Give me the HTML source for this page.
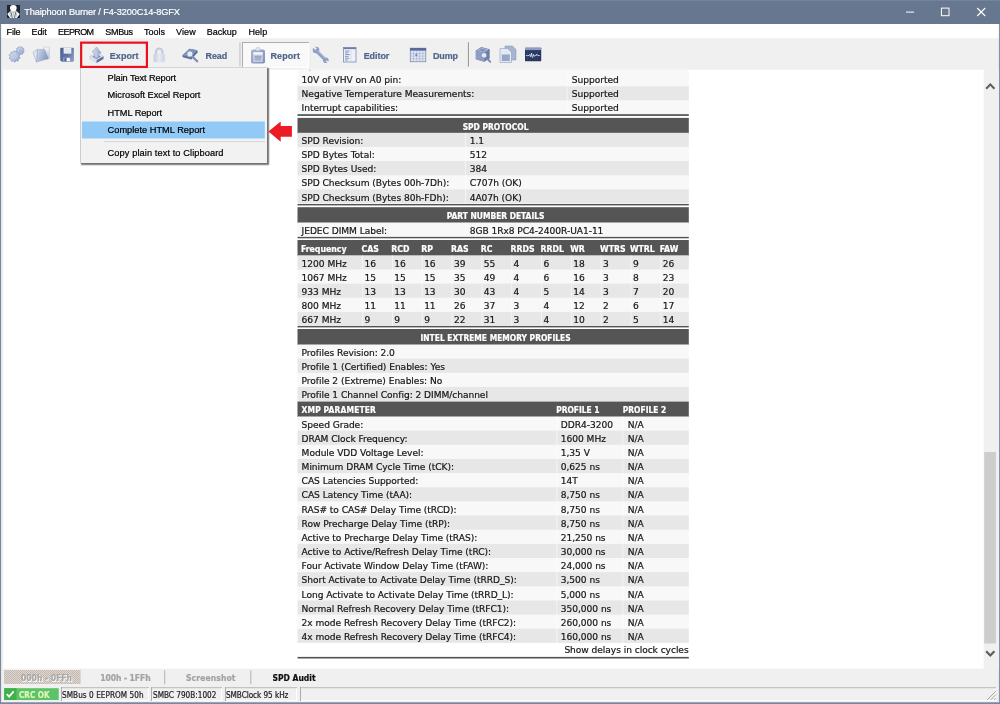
<!DOCTYPE html>
<html lang="en"><head><meta charset="utf-8"><title>Thaiphoon Burner / F4-3200C14-8GFX</title>
<style>
html,body{margin:0;padding:0}
body{width:1000px;height:704px;overflow:hidden;background:#f0f0f0;position:relative;font-family:"Liberation Sans","DejaVu Sans",sans-serif}
#w{filter:blur(.35px);position:absolute;left:0;top:0;width:1000px;height:704px;overflow:hidden}
#w div,#w svg{position:absolute}
.t{white-space:nowrap;-webkit-text-stroke:.2px}
</style></head><body><div id="w">
<svg style="left:0;top:0" width="1000" height="704" viewBox="0 0 1000 704">
<rect x="0.00" y="0.00" width="1000.00" height="24.00" fill="#66778f"/>
<rect x="0.00" y="0.00" width="1000.00" height="1.00" fill="#73849d"/>
<rect x="1.00" y="24.00" width="998.00" height="14.20" fill="#fff"/>
<rect x="3.30" y="69.80" width="980.50" height="598.80" fill="#fff"/>
<rect x="0.00" y="24.00" width="1.10" height="680.00" fill="#7a889f"/>
<rect x="998.90" y="24.00" width="1.10" height="680.00" fill="#8592a8"/>
<rect x="0.00" y="702.30" width="1000.00" height="1.70" fill="#78879f"/>
<rect x="239.30" y="42.30" width="1.30" height="23.80" fill="#c9c9c9"/>
<rect x="467.90" y="42.30" width="1.10" height="24.30" fill="#9c9c9c"/>
<rect x="297.50" y="69.80" width="391.30" height="17.30" fill="#f8f8f8"/>
<rect x="566.60" y="69.80" width="1.00" height="16.50" fill="rgba(255,255,255,.55)"/>
<rect x="309.40" y="69.90" width="1.00" height="0.90" fill="#8a8a8a"/>
<rect x="297.50" y="86.30" width="391.30" height="14.75" fill="#e7e7e7"/>
<rect x="566.60" y="86.30" width="1.00" height="13.95" fill="rgba(255,255,255,.55)"/>
<rect x="297.50" y="100.25" width="391.30" height="14.00" fill="#f8f8f8"/>
<rect x="566.60" y="100.25" width="1.00" height="14.00" fill="rgba(255,255,255,.55)"/>
<rect x="297.50" y="114.20" width="391.30" height="1.70" fill="#525252"/>
<rect x="297.50" y="117.90" width="391.30" height="15.70" fill="#555"/>
<rect x="297.50" y="132.80" width="391.30" height="14.95" fill="#e7e7e7"/>
<rect x="465.00" y="132.80" width="1.00" height="14.15" fill="rgba(255,255,255,.55)"/>
<rect x="297.50" y="146.95" width="391.30" height="14.95" fill="#f8f8f8"/>
<rect x="465.00" y="146.95" width="1.00" height="14.15" fill="rgba(255,255,255,.55)"/>
<rect x="297.50" y="161.10" width="391.30" height="14.95" fill="#e7e7e7"/>
<rect x="465.00" y="161.10" width="1.00" height="14.15" fill="rgba(255,255,255,.55)"/>
<rect x="297.50" y="175.25" width="391.30" height="14.95" fill="#f8f8f8"/>
<rect x="465.00" y="175.25" width="1.00" height="14.15" fill="rgba(255,255,255,.55)"/>
<rect x="297.50" y="189.40" width="391.30" height="14.15" fill="#e7e7e7"/>
<rect x="465.00" y="189.40" width="1.00" height="14.15" fill="rgba(255,255,255,.55)"/>
<rect x="297.50" y="204.00" width="391.30" height="1.40" fill="#525252"/>
<rect x="297.50" y="207.20" width="391.30" height="16.10" fill="#555"/>
<rect x="297.50" y="222.50" width="391.30" height="14.40" fill="#f8f8f8"/>
<rect x="465.00" y="222.50" width="1.00" height="14.40" fill="rgba(255,255,255,.55)"/>
<rect x="297.50" y="236.90" width="391.30" height="1.40" fill="#525252"/>
<rect x="297.50" y="240.00" width="391.30" height="16.10" fill="#555"/>
<rect x="297.50" y="255.30" width="391.30" height="14.95" fill="#e7e7e7"/>
<rect x="362.10" y="255.30" width="1.00" height="14.15" fill="rgba(255,255,255,.55)"/>
<rect x="391.92" y="255.30" width="1.00" height="14.15" fill="rgba(255,255,255,.55)"/>
<rect x="421.74" y="255.30" width="1.00" height="14.15" fill="rgba(255,255,255,.55)"/>
<rect x="451.56" y="255.30" width="1.00" height="14.15" fill="rgba(255,255,255,.55)"/>
<rect x="481.38" y="255.30" width="1.00" height="14.15" fill="rgba(255,255,255,.55)"/>
<rect x="511.20" y="255.30" width="1.00" height="14.15" fill="rgba(255,255,255,.55)"/>
<rect x="541.02" y="255.30" width="1.00" height="14.15" fill="rgba(255,255,255,.55)"/>
<rect x="570.84" y="255.30" width="1.00" height="14.15" fill="rgba(255,255,255,.55)"/>
<rect x="600.66" y="255.30" width="1.00" height="14.15" fill="rgba(255,255,255,.55)"/>
<rect x="630.48" y="255.30" width="1.00" height="14.15" fill="rgba(255,255,255,.55)"/>
<rect x="660.30" y="255.30" width="1.00" height="14.15" fill="rgba(255,255,255,.55)"/>
<rect x="297.50" y="269.45" width="391.30" height="14.95" fill="#f8f8f8"/>
<rect x="362.10" y="269.45" width="1.00" height="14.15" fill="rgba(255,255,255,.55)"/>
<rect x="391.92" y="269.45" width="1.00" height="14.15" fill="rgba(255,255,255,.55)"/>
<rect x="421.74" y="269.45" width="1.00" height="14.15" fill="rgba(255,255,255,.55)"/>
<rect x="451.56" y="269.45" width="1.00" height="14.15" fill="rgba(255,255,255,.55)"/>
<rect x="481.38" y="269.45" width="1.00" height="14.15" fill="rgba(255,255,255,.55)"/>
<rect x="511.20" y="269.45" width="1.00" height="14.15" fill="rgba(255,255,255,.55)"/>
<rect x="541.02" y="269.45" width="1.00" height="14.15" fill="rgba(255,255,255,.55)"/>
<rect x="570.84" y="269.45" width="1.00" height="14.15" fill="rgba(255,255,255,.55)"/>
<rect x="600.66" y="269.45" width="1.00" height="14.15" fill="rgba(255,255,255,.55)"/>
<rect x="630.48" y="269.45" width="1.00" height="14.15" fill="rgba(255,255,255,.55)"/>
<rect x="660.30" y="269.45" width="1.00" height="14.15" fill="rgba(255,255,255,.55)"/>
<rect x="297.50" y="283.60" width="391.30" height="14.95" fill="#e7e7e7"/>
<rect x="362.10" y="283.60" width="1.00" height="14.15" fill="rgba(255,255,255,.55)"/>
<rect x="391.92" y="283.60" width="1.00" height="14.15" fill="rgba(255,255,255,.55)"/>
<rect x="421.74" y="283.60" width="1.00" height="14.15" fill="rgba(255,255,255,.55)"/>
<rect x="451.56" y="283.60" width="1.00" height="14.15" fill="rgba(255,255,255,.55)"/>
<rect x="481.38" y="283.60" width="1.00" height="14.15" fill="rgba(255,255,255,.55)"/>
<rect x="511.20" y="283.60" width="1.00" height="14.15" fill="rgba(255,255,255,.55)"/>
<rect x="541.02" y="283.60" width="1.00" height="14.15" fill="rgba(255,255,255,.55)"/>
<rect x="570.84" y="283.60" width="1.00" height="14.15" fill="rgba(255,255,255,.55)"/>
<rect x="600.66" y="283.60" width="1.00" height="14.15" fill="rgba(255,255,255,.55)"/>
<rect x="630.48" y="283.60" width="1.00" height="14.15" fill="rgba(255,255,255,.55)"/>
<rect x="660.30" y="283.60" width="1.00" height="14.15" fill="rgba(255,255,255,.55)"/>
<rect x="297.50" y="297.75" width="391.30" height="14.95" fill="#f8f8f8"/>
<rect x="362.10" y="297.75" width="1.00" height="14.15" fill="rgba(255,255,255,.55)"/>
<rect x="391.92" y="297.75" width="1.00" height="14.15" fill="rgba(255,255,255,.55)"/>
<rect x="421.74" y="297.75" width="1.00" height="14.15" fill="rgba(255,255,255,.55)"/>
<rect x="451.56" y="297.75" width="1.00" height="14.15" fill="rgba(255,255,255,.55)"/>
<rect x="481.38" y="297.75" width="1.00" height="14.15" fill="rgba(255,255,255,.55)"/>
<rect x="511.20" y="297.75" width="1.00" height="14.15" fill="rgba(255,255,255,.55)"/>
<rect x="541.02" y="297.75" width="1.00" height="14.15" fill="rgba(255,255,255,.55)"/>
<rect x="570.84" y="297.75" width="1.00" height="14.15" fill="rgba(255,255,255,.55)"/>
<rect x="600.66" y="297.75" width="1.00" height="14.15" fill="rgba(255,255,255,.55)"/>
<rect x="630.48" y="297.75" width="1.00" height="14.15" fill="rgba(255,255,255,.55)"/>
<rect x="660.30" y="297.75" width="1.00" height="14.15" fill="rgba(255,255,255,.55)"/>
<rect x="297.50" y="311.90" width="391.30" height="14.15" fill="#e7e7e7"/>
<rect x="362.10" y="311.90" width="1.00" height="14.15" fill="rgba(255,255,255,.55)"/>
<rect x="391.92" y="311.90" width="1.00" height="14.15" fill="rgba(255,255,255,.55)"/>
<rect x="421.74" y="311.90" width="1.00" height="14.15" fill="rgba(255,255,255,.55)"/>
<rect x="451.56" y="311.90" width="1.00" height="14.15" fill="rgba(255,255,255,.55)"/>
<rect x="481.38" y="311.90" width="1.00" height="14.15" fill="rgba(255,255,255,.55)"/>
<rect x="511.20" y="311.90" width="1.00" height="14.15" fill="rgba(255,255,255,.55)"/>
<rect x="541.02" y="311.90" width="1.00" height="14.15" fill="rgba(255,255,255,.55)"/>
<rect x="570.84" y="311.90" width="1.00" height="14.15" fill="rgba(255,255,255,.55)"/>
<rect x="600.66" y="311.90" width="1.00" height="14.15" fill="rgba(255,255,255,.55)"/>
<rect x="630.48" y="311.90" width="1.00" height="14.15" fill="rgba(255,255,255,.55)"/>
<rect x="660.30" y="311.90" width="1.00" height="14.15" fill="rgba(255,255,255,.55)"/>
<rect x="297.50" y="326.00" width="391.30" height="1.40" fill="#525252"/>
<rect x="297.50" y="329.00" width="391.30" height="16.30" fill="#555"/>
<rect x="297.50" y="344.50" width="391.30" height="14.95" fill="#f8f8f8"/>
<rect x="297.50" y="358.65" width="391.30" height="14.95" fill="#e7e7e7"/>
<rect x="297.50" y="372.80" width="391.30" height="14.95" fill="#f8f8f8"/>
<rect x="297.50" y="386.95" width="391.30" height="14.95" fill="#e7e7e7"/>
<rect x="297.50" y="401.60" width="391.30" height="15.70" fill="#555"/>
<rect x="297.50" y="416.50" width="391.30" height="14.95" fill="#f8f8f8"/>
<rect x="556.30" y="416.50" width="1.00" height="14.15" fill="rgba(255,255,255,.55)"/>
<rect x="622.30" y="416.50" width="1.00" height="14.15" fill="rgba(255,255,255,.55)"/>
<rect x="297.50" y="430.65" width="391.30" height="14.95" fill="#e7e7e7"/>
<rect x="556.30" y="430.65" width="1.00" height="14.15" fill="rgba(255,255,255,.55)"/>
<rect x="622.30" y="430.65" width="1.00" height="14.15" fill="rgba(255,255,255,.55)"/>
<rect x="297.50" y="444.80" width="391.30" height="14.95" fill="#f8f8f8"/>
<rect x="556.30" y="444.80" width="1.00" height="14.15" fill="rgba(255,255,255,.55)"/>
<rect x="622.30" y="444.80" width="1.00" height="14.15" fill="rgba(255,255,255,.55)"/>
<rect x="297.50" y="458.95" width="391.30" height="14.95" fill="#e7e7e7"/>
<rect x="556.30" y="458.95" width="1.00" height="14.15" fill="rgba(255,255,255,.55)"/>
<rect x="622.30" y="458.95" width="1.00" height="14.15" fill="rgba(255,255,255,.55)"/>
<rect x="297.50" y="473.10" width="391.30" height="14.95" fill="#f8f8f8"/>
<rect x="556.30" y="473.10" width="1.00" height="14.15" fill="rgba(255,255,255,.55)"/>
<rect x="622.30" y="473.10" width="1.00" height="14.15" fill="rgba(255,255,255,.55)"/>
<rect x="297.50" y="487.25" width="391.30" height="14.95" fill="#e7e7e7"/>
<rect x="556.30" y="487.25" width="1.00" height="14.15" fill="rgba(255,255,255,.55)"/>
<rect x="622.30" y="487.25" width="1.00" height="14.15" fill="rgba(255,255,255,.55)"/>
<rect x="297.50" y="501.40" width="391.30" height="14.95" fill="#f8f8f8"/>
<rect x="556.30" y="501.40" width="1.00" height="14.15" fill="rgba(255,255,255,.55)"/>
<rect x="622.30" y="501.40" width="1.00" height="14.15" fill="rgba(255,255,255,.55)"/>
<rect x="297.50" y="515.55" width="391.30" height="14.95" fill="#e7e7e7"/>
<rect x="556.30" y="515.55" width="1.00" height="14.15" fill="rgba(255,255,255,.55)"/>
<rect x="622.30" y="515.55" width="1.00" height="14.15" fill="rgba(255,255,255,.55)"/>
<rect x="297.50" y="529.70" width="391.30" height="14.95" fill="#f8f8f8"/>
<rect x="556.30" y="529.70" width="1.00" height="14.15" fill="rgba(255,255,255,.55)"/>
<rect x="622.30" y="529.70" width="1.00" height="14.15" fill="rgba(255,255,255,.55)"/>
<rect x="297.50" y="543.85" width="391.30" height="14.95" fill="#e7e7e7"/>
<rect x="556.30" y="543.85" width="1.00" height="14.15" fill="rgba(255,255,255,.55)"/>
<rect x="622.30" y="543.85" width="1.00" height="14.15" fill="rgba(255,255,255,.55)"/>
<rect x="297.50" y="558.00" width="391.30" height="14.95" fill="#f8f8f8"/>
<rect x="556.30" y="558.00" width="1.00" height="14.15" fill="rgba(255,255,255,.55)"/>
<rect x="622.30" y="558.00" width="1.00" height="14.15" fill="rgba(255,255,255,.55)"/>
<rect x="297.50" y="572.15" width="391.30" height="14.95" fill="#e7e7e7"/>
<rect x="556.30" y="572.15" width="1.00" height="14.15" fill="rgba(255,255,255,.55)"/>
<rect x="622.30" y="572.15" width="1.00" height="14.15" fill="rgba(255,255,255,.55)"/>
<rect x="297.50" y="586.30" width="391.30" height="14.95" fill="#f8f8f8"/>
<rect x="556.30" y="586.30" width="1.00" height="14.15" fill="rgba(255,255,255,.55)"/>
<rect x="622.30" y="586.30" width="1.00" height="14.15" fill="rgba(255,255,255,.55)"/>
<rect x="297.50" y="600.45" width="391.30" height="14.95" fill="#e7e7e7"/>
<rect x="556.30" y="600.45" width="1.00" height="14.15" fill="rgba(255,255,255,.55)"/>
<rect x="622.30" y="600.45" width="1.00" height="14.15" fill="rgba(255,255,255,.55)"/>
<rect x="297.50" y="614.60" width="391.30" height="14.95" fill="#f8f8f8"/>
<rect x="556.30" y="614.60" width="1.00" height="14.15" fill="rgba(255,255,255,.55)"/>
<rect x="622.30" y="614.60" width="1.00" height="14.15" fill="rgba(255,255,255,.55)"/>
<rect x="297.50" y="628.75" width="391.30" height="14.15" fill="#e7e7e7"/>
<rect x="556.30" y="628.75" width="1.00" height="14.15" fill="rgba(255,255,255,.55)"/>
<rect x="622.30" y="628.75" width="1.00" height="14.15" fill="rgba(255,255,255,.55)"/>
<rect x="297.50" y="656.90" width="391.30" height="1.60" fill="#525252"/>
<rect x="983.80" y="69.80" width="15.20" height="598.80" fill="#f0f0f0"/>
<rect x="984.20" y="452.00" width="11.70" height="191.50" fill="#cdcdcd"/>
<rect x="164.20" y="670.30" width="1.00" height="14.00" fill="#b4b4b4"/>
<rect x="250.30" y="670.30" width="1.00" height="14.00" fill="#b4b4b4"/>
<rect x="4.20" y="688.20" width="54.50" height="11.80" fill="#5ec268"/>
<rect x="4.20" y="688.20" width="12.30" height="11.80" fill="#3fb14a"/>
</svg>
<svg style="left:6.900px;top:5px" width="13" height="13" viewBox="0 0 13 13">
<rect width="13" height="13" fill="#1d2834"/>
<path d="M4.300 5L.300 9.100 3.100 13h6.800l2.800-3.900L8.400 5z" fill="#fff"/>
<path d="M4.500 5.400L6.350 13 8.200 5.400z" fill="#c6cace"/>
<path d="M3.700 6.300L5.300 12.800M9 6.300L7.400 12.800" stroke="#1d2834" stroke-width=".7" fill="none"/>
<path d="M2.600 7.400L4 12.600M10.100 7.400L8.700 12.600" stroke="#55606c" stroke-width=".45" fill="none"/>
<ellipse cx="6.350" cy="3.100" rx="3.350" ry="3" fill="#fff"/>
</svg>
<div class="t" style="font:9.2px 'Liberation Sans',sans-serif;color:#fff;top:2.30px;height:20px;line-height:20px;letter-spacing:-0.113px;left:24.20px;">Thaiphoon Burner / F4-3200C14-8GFX</div>
<svg style="left:900px;top:0" width="100" height="24" viewBox="0 0 100 24" fill="none" stroke="#fff" stroke-width="1">
<path d="M6 12.100h8.100"/>
<rect x="41.400" y="8.100" width="7.600" height="7.600"/>
<path d="M77.200 8l8 8M85.200 8l-8 8" stroke-width="1.100"/>
</svg>
<div class="t" style="font:9.0px 'Liberation Sans',sans-serif;color:#000;top:22.00px;height:20px;line-height:20px;letter-spacing:-0.204px;left:6.60px;">File</div>
<div class="t" style="font:9.0px 'Liberation Sans',sans-serif;color:#000;top:22.00px;height:20px;line-height:20px;letter-spacing:-0.104px;left:31.50px;">Edit</div>
<div class="t" style="font:9.0px 'Liberation Sans',sans-serif;color:#000;top:22.00px;height:20px;line-height:20px;letter-spacing:-0.603px;left:58.10px;">EEPROM</div>
<div class="t" style="font:9.0px 'Liberation Sans',sans-serif;color:#000;top:22.00px;height:20px;line-height:20px;letter-spacing:-0.323px;left:105.30px;">SMBus</div>
<div class="t" style="font:9.0px 'Liberation Sans',sans-serif;color:#000;top:22.00px;height:20px;line-height:20px;letter-spacing:-0.003px;left:144.10px;">Tools</div>
<div class="t" style="font:9.0px 'Liberation Sans',sans-serif;color:#000;top:22.00px;height:20px;line-height:20px;letter-spacing:0.135px;left:176.00px;">View</div>
<div class="t" style="font:9.0px 'Liberation Sans',sans-serif;color:#000;top:22.00px;height:20px;line-height:20px;letter-spacing:-0.005px;left:206.80px;">Backup</div>
<div class="t" style="font:9.0px 'Liberation Sans',sans-serif;color:#000;top:22.00px;height:20px;line-height:20px;letter-spacing:0.096px;left:248.40px;">Help</div>
<div style="left:242.00px;top:42.00px;width:66.50px;height:25.50px;background:#f9f9f9;box-shadow:inset 1px 1px 0 #adadad, inset -1px -1px 0 #fff;"></div>
<div class="t" style="font:bold 8.98px 'Liberation Sans',sans-serif;color:#4f648c;top:46.40px;height:20px;line-height:20px;letter-spacing:0.082px;left:109.80px;">Export</div>
<div class="t" style="font:bold 8.98px 'Liberation Sans',sans-serif;color:#4f648c;top:46.40px;height:20px;line-height:20px;letter-spacing:-0.084px;left:205.50px;">Read</div>
<div class="t" style="font:bold 8.98px 'Liberation Sans',sans-serif;color:#4f648c;top:46.40px;height:20px;line-height:20px;letter-spacing:0.099px;left:270.50px;">Report</div>
<div class="t" style="font:bold 8.98px 'Liberation Sans',sans-serif;color:#4f648c;top:46.40px;height:20px;line-height:20px;letter-spacing:-0.054px;left:363.70px;">Editor</div>
<div class="t" style="font:bold 8.98px 'Liberation Sans',sans-serif;color:#4f648c;top:46.40px;height:20px;line-height:20px;letter-spacing:-0.080px;left:432.90px;">Dump</div>
<svg style="left:0;top:40px" width="560" height="30" viewBox="0 40 560 30">
<defs>
<linearGradient id="gA" x1="0" y1="0" x2="1" y2="1"><stop offset="0" stop-color="#c4cee5"/><stop offset="1" stop-color="#98a7c9"/></linearGradient>
<linearGradient id="gB" x1="0" y1="0" x2="1" y2="1"><stop offset="0" stop-color="#93a2c5"/><stop offset="1" stop-color="#eef1f8"/></linearGradient>
<linearGradient id="gC" x1="0" y1="0" x2="0" y2="1"><stop offset="0" stop-color="#f4f6fa"/><stop offset="1" stop-color="#b9c4dc"/></linearGradient>
<linearGradient id="gD" x1="0" y1="0" x2="0" y2="1"><stop offset="0" stop-color="#6a7eab"/><stop offset="1" stop-color="#4f6494"/></linearGradient>
<linearGradient id="gL" x1="0" y1="0" x2="1" y2="0"><stop offset="0" stop-color="#c3cce0"/><stop offset=".5" stop-color="#e6eaf2"/><stop offset="1" stop-color="#cbd3e4"/></linearGradient>
<linearGradient id="gG" x1="0" y1="0" x2="1" y2="1"><stop offset="0" stop-color="#d6dfef"/><stop offset=".55" stop-color="#b4c2de"/><stop offset="1" stop-color="#8699c2"/></linearGradient>
<linearGradient id="gF" x1="0" y1="0" x2="1" y2=".35"><stop offset="0" stop-color="#d3dbec"/><stop offset="1" stop-color="#8b9cc2"/></linearGradient>
<linearGradient id="gD2" x1="0" y1="0" x2="1" y2=".6"><stop offset="0" stop-color="#4b6091"/><stop offset=".6" stop-color="#5f74a3"/><stop offset="1" stop-color="#8496bd"/></linearGradient>
<linearGradient id="gE" x1="0" y1="0" x2="1" y2="0"><stop offset="0" stop-color="#d5dded"/><stop offset=".5" stop-color="#bcc8e0"/><stop offset="1" stop-color="#8a9bc3"/></linearGradient>
<linearGradient id="gR" x1="0" y1="0" x2="1" y2="1"><stop offset="0" stop-color="#aab7d4"/><stop offset="1" stop-color="#7f90b9"/></linearGradient>
</defs>
<path d="M24.22 51.53L24.01 52.24L23.00 52.47L22.65 52.95L22.72 53.99L22.11 54.39L21.18 53.92L20.60 54.06L19.99 54.90L19.27 54.82L18.86 53.86L18.33 53.60L17.32 53.85L16.81 53.32L17.11 52.32L16.88 51.78L15.95 51.32L15.90 50.59L16.77 50.02L16.94 49.46L16.52 48.51L16.95 47.92L17.98 48.04L18.48 47.71L18.76 46.72L19.48 46.55L20.19 47.30L20.78 47.37L21.64 46.79L22.29 47.12L22.35 48.15L22.76 48.58L23.79 48.69L24.08 49.36L23.46 50.20L23.50 50.79ZM20.80 50.70A0.7 0.7 0 1 0 19.40 50.70A0.7 0.7 0 1 0 20.80 50.70Z" fill="url(#gG)" fill-rule="evenodd" stroke="#8295bf" stroke-width=".6"/>
<path d="M20.09 57.61L19.85 58.46L18.61 58.76L18.20 59.36L18.39 60.63L17.69 61.17L16.51 60.68L15.83 60.93L15.24 62.06L14.36 62.09L13.69 61.01L12.99 60.81L11.85 61.38L11.12 60.89L11.21 59.61L10.77 59.04L9.51 58.83L9.20 58.00L10.03 57.02L10.00 56.30L9.11 55.39L9.35 54.54L10.59 54.24L11.00 53.64L10.81 52.37L11.51 51.83L12.69 52.32L13.37 52.07L13.96 50.94L14.84 50.91L15.51 51.99L16.21 52.19L17.35 51.62L18.08 52.11L17.99 53.39L18.43 53.96L19.69 54.17L20.00 55.00L19.17 55.98L19.20 56.70ZM15.50 56.50A0.9 0.9 0 1 0 13.70 56.50A0.9 0.9 0 1 0 15.50 56.50Z" fill="url(#gG)" fill-rule="evenodd" stroke="#8295bf" stroke-width=".6"/>
<circle cx="14.600" cy="56.500" r="1.700" fill="none" stroke="#d9e1f0" stroke-width=".7"/>
<path d="M43 49.400L44.200 47.100L48.600 47.100Q49.400 47.100 49.400 47.900L49.400 58.400L47 59.200z" fill="url(#gC)" stroke="#aab6d1" stroke-width=".5"/>
<path d="M37.300 49.400L44.600 49.400L48 57.600L48 58.800L36.500 62.100z" fill="url(#gF)" stroke="#8b9bc1" stroke-width=".4"/>
<path d="M33.100 52.300L37.300 49.500L36.500 62.100z" fill="#e2e7f2" stroke="#8e9ec3" stroke-width=".5"/>
<path d="M60.200 48.800q0-1 1-1h11.700q1 0 1 1v12q0 1-1 1H61.800l-1.600-1.600z" fill="url(#gD2)"/>
<rect x="63.600" y="47.800" width="7.700" height="5.800" fill="#eef1f7"/>
<path d="M64.600 49.600h5.700M64.600 51.600h5.700" stroke="#d3dae8" stroke-width=".8"/>
<rect x="63.100" y="57.400" width="7.700" height="4.400" fill="#8fa0c5"/>
<rect x="64.500" y="58.200" width="1.500" height="3" fill="#50659a"/>
<rect x="67" y="58.100" width="2.800" height="3.100" fill="#fff"/>
<path d="M89.900 56.300L96.300 53.200L103.500 56.300L96.600 60.200z" fill="#e9edf5" stroke="#9aa9cb" stroke-width=".4"/>
<path d="M92.300 56.400L96.400 54.400L101 56.400L96.600 58.900z" fill="#6b7fac"/>
<path d="M89.900 56.300L96.600 60.200L96.600 63.100L89.900 59.200z" fill="#dfe5f1" stroke="#a3b0cf" stroke-width=".3"/>
<path d="M96.600 60.200L103.500 56.300L103.500 59L96.600 63.100z" fill="#5b709f"/>
<path d="M96.600 47L101.200 53.200L98.900 53L98.900 57L96.600 58.200L94.200 57L94.200 52.400L92.200 52z" fill="url(#gE)" stroke="#8394bd" stroke-width=".5"/>
<path d="M156 54.500v-2.600a3.200 3.300 0 0 1 6.400 0v2.600" fill="none" stroke="#c3cbdd" stroke-width="2.300"/>
<rect x="153.600" y="53.400" width="11.200" height="8.900" rx="1.500" fill="url(#gL)"/>
<path d="M182.300 55.500l7.200-6.800 7.800 1.600.5 2-6.500 7.200-8.500-2.200z" fill="#5a6e9d"/>
<path d="M182.300 55.500l7.200-6.800 7.800 1.600-6.800 6.700z" fill="#8092ba"/>
<path d="M192.200 56.500l5 4.800" stroke="#7b8cb5" stroke-width="2.200" stroke-linecap="round"/>
<circle cx="189.900" cy="54" r="3.100" fill="#e6ebf4" stroke="#8595bb" stroke-width=".9"/>
<rect x="251" y="49.400" width="14" height="14.100" rx="1.800" fill="url(#gR)"/>
<rect x="256" y="47.600" width="4" height="3.200" rx=".9" fill="#dfe5f1" stroke="#a3b0cf" stroke-width=".4"/>
<rect x="253.400" y="52.300" width="9.200" height="9.400" fill="#dbe1ee"/>
<rect x="253.400" y="52.300" width="9.200" height="2" fill="#f3f5f9"/>
<rect x="254.500" y="55.400" width="7" height="5.300" fill="#a4b1d0"/>
<path d="M254.500 56.700h7" stroke="#8e9ec3" stroke-width=".6"/>
<path d="M317 51.500l8.400 8.400" stroke="#8e9fc6" stroke-width="3.300" stroke-linecap="round"/>
<circle cx="316" cy="50" r="3.300" fill="#8e9fc6"/>
<path d="M312.800 46.200l3.300 3.100" stroke="#f0f0f0" stroke-width="1.900"/>
<circle cx="325.800" cy="60.200" r="2.800" fill="#8e9fc6"/>
<path d="M326.200 60.700l2.600 2.500" stroke="#f0f0f0" stroke-width="1.500"/>
<path d="M317.500 50.800l8 8" stroke="#b9c5df" stroke-width=".8" stroke-linecap="round"/>
<rect x="343.500" y="47.500" width="12.500" height="14.500" fill="#eef1f8" stroke="#7a8cb5" stroke-width=".8"/>
<rect x="343.500" y="47.500" width="12.500" height="1.600" fill="#6b7eab"/>
<path d="M345 51h4.500M345 52.800h3.500M345 54.600h5M345 56.400h3.500M345 58.200h4.500M345 60h3" stroke="#6f82ad" stroke-width=".8"/>
<path d="M351 50v11" stroke="#c8d0e3" stroke-width=".6"/>
<rect x="410.300" y="48.200" width="15.500" height="13.500" fill="#e3e8f3" stroke="#7a8cb5" stroke-width=".8"/>
<rect x="410" y="48" width="16.100" height="2.700" fill="#586c9c"/>
<path d="M410.500 53.400h15M410.500 56.100h15M410.500 58.800h15M413.500 51v10.500M416.600 51v10.500M419.700 51v10.500M422.800 51v10.500" stroke="#a3b0cf" stroke-width=".6"/>
<rect x="415.400" y="54.200" width="1.800" height="1.500" fill="#586c9c"/>
<path d="M475.800 50.500l5.600-3.400 8.300 2.200v9.200l-5.400 3.300-8.500-2.500z" fill="#6a7dab"/>
<path d="M477.500 50.600l4.200-2.400 6 1.600-4 2.400z" fill="#8091ba" stroke="#c5cfe4" stroke-width=".7"/>
<path d="M475.800 50.500l8.500 2.400v8.900l-8.500-2.500z" fill="#8d9dc3"/>
<path d="M486 57.500l4.300 4.400" stroke="#7183ad" stroke-width="1.700" stroke-linecap="round"/>
<circle cx="484" cy="55.300" r="2.800" fill="#e3e8f3" stroke="#7c8db6" stroke-width=".9"/>
<path d="M505 46h7.500l3.500 3.500v10.500h-11z" fill="#a7b4d2" stroke="#7f90b8" stroke-width=".5"/>
<path d="M500 48.500h7.700l3.800 3.800v10.200h-11.500z" fill="#e4e9f3" stroke="#8d9dc2" stroke-width=".6"/>
<rect x="501.800" y="54.500" width="8" height="6.500" fill="#98a7c8"/>
<rect x="525" y="47.700" width="16.200" height="13.500" rx=".6" fill="#263660"/>
<rect x="525" y="47.700" width="16.200" height="2.400" fill="#8e9dc1"/>
<path d="M526 55.600h3l.8-1.200.8 2.400.9-3.600 1 4.800.9-3.600.8 1.800.8-.6h1.200l.7-1.500.8 1.500h2" fill="none" stroke="#fff" stroke-width=".8"/>
<path d="M527.500 50.500v10M530 50.500v10M532.500 50.500v10M535 50.500v10M537.500 50.500v10" stroke="#4a5b88" stroke-width=".4"/>
</svg>
<div class="t" style="font:9.1px 'DejaVu Sans',sans-serif;color:#161616;top:69.90px;height:20px;line-height:20px;letter-spacing:-0.050px;left:301.60px;">10V of VHV on A0 pin:</div>
<div class="t" style="font:9.1px 'DejaVu Sans',sans-serif;color:#161616;top:69.90px;height:20px;line-height:20px;letter-spacing:-0.050px;left:571.80px;">Supported</div>
<div class="t" style="font:9.1px 'DejaVu Sans',sans-serif;color:#161616;top:84.10px;height:20px;line-height:20px;letter-spacing:-0.050px;left:301.60px;">Negative Temperature Measurements:</div>
<div class="t" style="font:9.1px 'DejaVu Sans',sans-serif;color:#161616;top:84.10px;height:20px;line-height:20px;letter-spacing:-0.050px;left:571.80px;">Supported</div>
<div class="t" style="font:9.1px 'DejaVu Sans',sans-serif;color:#161616;top:98.10px;height:20px;line-height:20px;letter-spacing:-0.050px;left:301.60px;">Interrupt capabilities:</div>
<div class="t" style="font:9.1px 'DejaVu Sans',sans-serif;color:#161616;top:98.10px;height:20px;line-height:20px;letter-spacing:-0.050px;left:571.80px;">Supported</div>
<div class="t" style="font:bold condensed 8.39px 'DejaVu Sans Condensed','DejaVu Sans',sans-serif;color:#fff;top:116.55px;height:20px;line-height:20px;left:295.60px;width:400px;text-align:center;">SPD PROTOCOL</div>
<div class="t" style="font:9.1px 'DejaVu Sans',sans-serif;color:#161616;top:131.00px;height:20px;line-height:20px;letter-spacing:-0.050px;left:301.60px;">SPD Revision:</div>
<div class="t" style="font:9.1px 'DejaVu Sans',sans-serif;color:#161616;top:131.00px;height:20px;line-height:20px;letter-spacing:-0.050px;left:469.70px;">1.1</div>
<div class="t" style="font:9.1px 'DejaVu Sans',sans-serif;color:#161616;top:145.15px;height:20px;line-height:20px;letter-spacing:-0.050px;left:301.60px;">SPD Bytes Total:</div>
<div class="t" style="font:9.1px 'DejaVu Sans',sans-serif;color:#161616;top:145.15px;height:20px;line-height:20px;letter-spacing:-0.050px;left:469.70px;">512</div>
<div class="t" style="font:9.1px 'DejaVu Sans',sans-serif;color:#161616;top:159.30px;height:20px;line-height:20px;letter-spacing:-0.050px;left:301.60px;">SPD Bytes Used:</div>
<div class="t" style="font:9.1px 'DejaVu Sans',sans-serif;color:#161616;top:159.30px;height:20px;line-height:20px;letter-spacing:-0.050px;left:469.70px;">384</div>
<div class="t" style="font:9.1px 'DejaVu Sans',sans-serif;color:#161616;top:173.45px;height:20px;line-height:20px;letter-spacing:-0.050px;left:301.60px;">SPD Checksum (Bytes 00h-7Dh):</div>
<div class="t" style="font:9.1px 'DejaVu Sans',sans-serif;color:#161616;top:173.45px;height:20px;line-height:20px;letter-spacing:-0.050px;left:469.70px;">C707h (OK)</div>
<div class="t" style="font:9.1px 'DejaVu Sans',sans-serif;color:#161616;top:187.60px;height:20px;line-height:20px;letter-spacing:-0.050px;left:301.60px;">SPD Checksum (Bytes 80h-FDh):</div>
<div class="t" style="font:9.1px 'DejaVu Sans',sans-serif;color:#161616;top:187.60px;height:20px;line-height:20px;letter-spacing:-0.050px;left:469.70px;">4A07h (OK)</div>
<div class="t" style="font:bold condensed 8.39px 'DejaVu Sans Condensed','DejaVu Sans',sans-serif;color:#fff;top:206.05px;height:20px;line-height:20px;left:295.60px;width:400px;text-align:center;">PART NUMBER DETAILS</div>
<div class="t" style="font:9.1px 'DejaVu Sans',sans-serif;color:#161616;top:220.70px;height:20px;line-height:20px;letter-spacing:-0.050px;left:301.60px;">JEDEC DIMM Label:</div>
<div class="t" style="font:9.1px 'DejaVu Sans',sans-serif;color:#161616;top:220.70px;height:20px;line-height:20px;letter-spacing:-0.050px;left:469.70px;">8GB 1Rx8 PC4-2400R-UA1-11</div>
<div class="t" style="font:bold condensed 8.69px 'DejaVu Sans Condensed','DejaVu Sans',sans-serif;color:#fff;top:239.00px;height:20px;line-height:20px;left:300.90px;">Frequency</div>
<div class="t" style="font:bold condensed 8.69px 'DejaVu Sans Condensed','DejaVu Sans',sans-serif;color:#fff;top:239.00px;height:20px;line-height:20px;left:361.50px;">CAS</div>
<div class="t" style="font:bold condensed 8.69px 'DejaVu Sans Condensed','DejaVu Sans',sans-serif;color:#fff;top:239.00px;height:20px;line-height:20px;left:391.32px;">RCD</div>
<div class="t" style="font:bold condensed 8.69px 'DejaVu Sans Condensed','DejaVu Sans',sans-serif;color:#fff;top:239.00px;height:20px;line-height:20px;left:421.14px;">RP</div>
<div class="t" style="font:bold condensed 8.69px 'DejaVu Sans Condensed','DejaVu Sans',sans-serif;color:#fff;top:239.00px;height:20px;line-height:20px;left:450.96px;">RAS</div>
<div class="t" style="font:bold condensed 8.69px 'DejaVu Sans Condensed','DejaVu Sans',sans-serif;color:#fff;top:239.00px;height:20px;line-height:20px;left:480.78px;">RC</div>
<div class="t" style="font:bold condensed 8.69px 'DejaVu Sans Condensed','DejaVu Sans',sans-serif;color:#fff;top:239.00px;height:20px;line-height:20px;left:510.60px;">RRDS</div>
<div class="t" style="font:bold condensed 8.69px 'DejaVu Sans Condensed','DejaVu Sans',sans-serif;color:#fff;top:239.00px;height:20px;line-height:20px;left:540.42px;">RRDL</div>
<div class="t" style="font:bold condensed 8.69px 'DejaVu Sans Condensed','DejaVu Sans',sans-serif;color:#fff;top:239.00px;height:20px;line-height:20px;left:570.24px;">WR</div>
<div class="t" style="font:bold condensed 8.69px 'DejaVu Sans Condensed','DejaVu Sans',sans-serif;color:#fff;top:239.00px;height:20px;line-height:20px;left:600.06px;">WTRS</div>
<div class="t" style="font:bold condensed 8.69px 'DejaVu Sans Condensed','DejaVu Sans',sans-serif;color:#fff;top:239.00px;height:20px;line-height:20px;left:629.88px;">WTRL</div>
<div class="t" style="font:bold condensed 8.69px 'DejaVu Sans Condensed','DejaVu Sans',sans-serif;color:#fff;top:239.00px;height:20px;line-height:20px;left:659.70px;">FAW</div>
<div class="t" style="font:9.1px 'DejaVu Sans',sans-serif;color:#161616;top:253.50px;height:20px;line-height:20px;letter-spacing:-0.050px;left:301.60px;">1200 MHz</div>
<div class="t" style="font:9.1px 'DejaVu Sans',sans-serif;color:#161616;top:253.50px;height:20px;line-height:20px;letter-spacing:-0.050px;left:364.50px;">16</div>
<div class="t" style="font:9.1px 'DejaVu Sans',sans-serif;color:#161616;top:253.50px;height:20px;line-height:20px;letter-spacing:-0.050px;left:394.32px;">16</div>
<div class="t" style="font:9.1px 'DejaVu Sans',sans-serif;color:#161616;top:253.50px;height:20px;line-height:20px;letter-spacing:-0.050px;left:424.14px;">16</div>
<div class="t" style="font:9.1px 'DejaVu Sans',sans-serif;color:#161616;top:253.50px;height:20px;line-height:20px;letter-spacing:-0.050px;left:453.96px;">39</div>
<div class="t" style="font:9.1px 'DejaVu Sans',sans-serif;color:#161616;top:253.50px;height:20px;line-height:20px;letter-spacing:-0.050px;left:483.78px;">55</div>
<div class="t" style="font:9.1px 'DejaVu Sans',sans-serif;color:#161616;top:253.50px;height:20px;line-height:20px;letter-spacing:-0.050px;left:513.60px;">4</div>
<div class="t" style="font:9.1px 'DejaVu Sans',sans-serif;color:#161616;top:253.50px;height:20px;line-height:20px;letter-spacing:-0.050px;left:543.42px;">6</div>
<div class="t" style="font:9.1px 'DejaVu Sans',sans-serif;color:#161616;top:253.50px;height:20px;line-height:20px;letter-spacing:-0.050px;left:573.24px;">18</div>
<div class="t" style="font:9.1px 'DejaVu Sans',sans-serif;color:#161616;top:253.50px;height:20px;line-height:20px;letter-spacing:-0.050px;left:603.06px;">3</div>
<div class="t" style="font:9.1px 'DejaVu Sans',sans-serif;color:#161616;top:253.50px;height:20px;line-height:20px;letter-spacing:-0.050px;left:632.88px;">9</div>
<div class="t" style="font:9.1px 'DejaVu Sans',sans-serif;color:#161616;top:253.50px;height:20px;line-height:20px;letter-spacing:-0.050px;left:662.70px;">26</div>
<div class="t" style="font:9.1px 'DejaVu Sans',sans-serif;color:#161616;top:267.65px;height:20px;line-height:20px;letter-spacing:-0.050px;left:301.60px;">1067 MHz</div>
<div class="t" style="font:9.1px 'DejaVu Sans',sans-serif;color:#161616;top:267.65px;height:20px;line-height:20px;letter-spacing:-0.050px;left:364.50px;">15</div>
<div class="t" style="font:9.1px 'DejaVu Sans',sans-serif;color:#161616;top:267.65px;height:20px;line-height:20px;letter-spacing:-0.050px;left:394.32px;">15</div>
<div class="t" style="font:9.1px 'DejaVu Sans',sans-serif;color:#161616;top:267.65px;height:20px;line-height:20px;letter-spacing:-0.050px;left:424.14px;">15</div>
<div class="t" style="font:9.1px 'DejaVu Sans',sans-serif;color:#161616;top:267.65px;height:20px;line-height:20px;letter-spacing:-0.050px;left:453.96px;">35</div>
<div class="t" style="font:9.1px 'DejaVu Sans',sans-serif;color:#161616;top:267.65px;height:20px;line-height:20px;letter-spacing:-0.050px;left:483.78px;">49</div>
<div class="t" style="font:9.1px 'DejaVu Sans',sans-serif;color:#161616;top:267.65px;height:20px;line-height:20px;letter-spacing:-0.050px;left:513.60px;">4</div>
<div class="t" style="font:9.1px 'DejaVu Sans',sans-serif;color:#161616;top:267.65px;height:20px;line-height:20px;letter-spacing:-0.050px;left:543.42px;">6</div>
<div class="t" style="font:9.1px 'DejaVu Sans',sans-serif;color:#161616;top:267.65px;height:20px;line-height:20px;letter-spacing:-0.050px;left:573.24px;">16</div>
<div class="t" style="font:9.1px 'DejaVu Sans',sans-serif;color:#161616;top:267.65px;height:20px;line-height:20px;letter-spacing:-0.050px;left:603.06px;">3</div>
<div class="t" style="font:9.1px 'DejaVu Sans',sans-serif;color:#161616;top:267.65px;height:20px;line-height:20px;letter-spacing:-0.050px;left:632.88px;">8</div>
<div class="t" style="font:9.1px 'DejaVu Sans',sans-serif;color:#161616;top:267.65px;height:20px;line-height:20px;letter-spacing:-0.050px;left:662.70px;">23</div>
<div class="t" style="font:9.1px 'DejaVu Sans',sans-serif;color:#161616;top:281.80px;height:20px;line-height:20px;letter-spacing:-0.050px;left:301.60px;">933 MHz</div>
<div class="t" style="font:9.1px 'DejaVu Sans',sans-serif;color:#161616;top:281.80px;height:20px;line-height:20px;letter-spacing:-0.050px;left:364.50px;">13</div>
<div class="t" style="font:9.1px 'DejaVu Sans',sans-serif;color:#161616;top:281.80px;height:20px;line-height:20px;letter-spacing:-0.050px;left:394.32px;">13</div>
<div class="t" style="font:9.1px 'DejaVu Sans',sans-serif;color:#161616;top:281.80px;height:20px;line-height:20px;letter-spacing:-0.050px;left:424.14px;">13</div>
<div class="t" style="font:9.1px 'DejaVu Sans',sans-serif;color:#161616;top:281.80px;height:20px;line-height:20px;letter-spacing:-0.050px;left:453.96px;">30</div>
<div class="t" style="font:9.1px 'DejaVu Sans',sans-serif;color:#161616;top:281.80px;height:20px;line-height:20px;letter-spacing:-0.050px;left:483.78px;">43</div>
<div class="t" style="font:9.1px 'DejaVu Sans',sans-serif;color:#161616;top:281.80px;height:20px;line-height:20px;letter-spacing:-0.050px;left:513.60px;">4</div>
<div class="t" style="font:9.1px 'DejaVu Sans',sans-serif;color:#161616;top:281.80px;height:20px;line-height:20px;letter-spacing:-0.050px;left:543.42px;">5</div>
<div class="t" style="font:9.1px 'DejaVu Sans',sans-serif;color:#161616;top:281.80px;height:20px;line-height:20px;letter-spacing:-0.050px;left:573.24px;">14</div>
<div class="t" style="font:9.1px 'DejaVu Sans',sans-serif;color:#161616;top:281.80px;height:20px;line-height:20px;letter-spacing:-0.050px;left:603.06px;">3</div>
<div class="t" style="font:9.1px 'DejaVu Sans',sans-serif;color:#161616;top:281.80px;height:20px;line-height:20px;letter-spacing:-0.050px;left:632.88px;">7</div>
<div class="t" style="font:9.1px 'DejaVu Sans',sans-serif;color:#161616;top:281.80px;height:20px;line-height:20px;letter-spacing:-0.050px;left:662.70px;">20</div>
<div class="t" style="font:9.1px 'DejaVu Sans',sans-serif;color:#161616;top:295.95px;height:20px;line-height:20px;letter-spacing:-0.050px;left:301.60px;">800 MHz</div>
<div class="t" style="font:9.1px 'DejaVu Sans',sans-serif;color:#161616;top:295.95px;height:20px;line-height:20px;letter-spacing:-0.050px;left:364.50px;">11</div>
<div class="t" style="font:9.1px 'DejaVu Sans',sans-serif;color:#161616;top:295.95px;height:20px;line-height:20px;letter-spacing:-0.050px;left:394.32px;">11</div>
<div class="t" style="font:9.1px 'DejaVu Sans',sans-serif;color:#161616;top:295.95px;height:20px;line-height:20px;letter-spacing:-0.050px;left:424.14px;">11</div>
<div class="t" style="font:9.1px 'DejaVu Sans',sans-serif;color:#161616;top:295.95px;height:20px;line-height:20px;letter-spacing:-0.050px;left:453.96px;">26</div>
<div class="t" style="font:9.1px 'DejaVu Sans',sans-serif;color:#161616;top:295.95px;height:20px;line-height:20px;letter-spacing:-0.050px;left:483.78px;">37</div>
<div class="t" style="font:9.1px 'DejaVu Sans',sans-serif;color:#161616;top:295.95px;height:20px;line-height:20px;letter-spacing:-0.050px;left:513.60px;">3</div>
<div class="t" style="font:9.1px 'DejaVu Sans',sans-serif;color:#161616;top:295.95px;height:20px;line-height:20px;letter-spacing:-0.050px;left:543.42px;">4</div>
<div class="t" style="font:9.1px 'DejaVu Sans',sans-serif;color:#161616;top:295.95px;height:20px;line-height:20px;letter-spacing:-0.050px;left:573.24px;">12</div>
<div class="t" style="font:9.1px 'DejaVu Sans',sans-serif;color:#161616;top:295.95px;height:20px;line-height:20px;letter-spacing:-0.050px;left:603.06px;">2</div>
<div class="t" style="font:9.1px 'DejaVu Sans',sans-serif;color:#161616;top:295.95px;height:20px;line-height:20px;letter-spacing:-0.050px;left:632.88px;">6</div>
<div class="t" style="font:9.1px 'DejaVu Sans',sans-serif;color:#161616;top:295.95px;height:20px;line-height:20px;letter-spacing:-0.050px;left:662.70px;">17</div>
<div class="t" style="font:9.1px 'DejaVu Sans',sans-serif;color:#161616;top:310.10px;height:20px;line-height:20px;letter-spacing:-0.050px;left:301.60px;">667 MHz</div>
<div class="t" style="font:9.1px 'DejaVu Sans',sans-serif;color:#161616;top:310.10px;height:20px;line-height:20px;letter-spacing:-0.050px;left:364.50px;">9</div>
<div class="t" style="font:9.1px 'DejaVu Sans',sans-serif;color:#161616;top:310.10px;height:20px;line-height:20px;letter-spacing:-0.050px;left:394.32px;">9</div>
<div class="t" style="font:9.1px 'DejaVu Sans',sans-serif;color:#161616;top:310.10px;height:20px;line-height:20px;letter-spacing:-0.050px;left:424.14px;">9</div>
<div class="t" style="font:9.1px 'DejaVu Sans',sans-serif;color:#161616;top:310.10px;height:20px;line-height:20px;letter-spacing:-0.050px;left:453.96px;">22</div>
<div class="t" style="font:9.1px 'DejaVu Sans',sans-serif;color:#161616;top:310.10px;height:20px;line-height:20px;letter-spacing:-0.050px;left:483.78px;">31</div>
<div class="t" style="font:9.1px 'DejaVu Sans',sans-serif;color:#161616;top:310.10px;height:20px;line-height:20px;letter-spacing:-0.050px;left:513.60px;">3</div>
<div class="t" style="font:9.1px 'DejaVu Sans',sans-serif;color:#161616;top:310.10px;height:20px;line-height:20px;letter-spacing:-0.050px;left:543.42px;">4</div>
<div class="t" style="font:9.1px 'DejaVu Sans',sans-serif;color:#161616;top:310.10px;height:20px;line-height:20px;letter-spacing:-0.050px;left:573.24px;">10</div>
<div class="t" style="font:9.1px 'DejaVu Sans',sans-serif;color:#161616;top:310.10px;height:20px;line-height:20px;letter-spacing:-0.050px;left:603.06px;">2</div>
<div class="t" style="font:9.1px 'DejaVu Sans',sans-serif;color:#161616;top:310.10px;height:20px;line-height:20px;letter-spacing:-0.050px;left:632.88px;">5</div>
<div class="t" style="font:9.1px 'DejaVu Sans',sans-serif;color:#161616;top:310.10px;height:20px;line-height:20px;letter-spacing:-0.050px;left:662.70px;">14</div>
<div class="t" style="font:bold condensed 8.39px 'DejaVu Sans Condensed','DejaVu Sans',sans-serif;color:#fff;top:327.95px;height:20px;line-height:20px;left:295.60px;width:400px;text-align:center;">INTEL EXTREME MEMORY PROFILES</div>
<div class="t" style="font:9.1px 'DejaVu Sans',sans-serif;color:#161616;top:342.70px;height:20px;line-height:20px;letter-spacing:-0.050px;left:301.60px;">Profiles Revision: 2.0</div>
<div class="t" style="font:9.1px 'DejaVu Sans',sans-serif;color:#161616;top:356.85px;height:20px;line-height:20px;letter-spacing:-0.050px;left:301.60px;">Profile 1 (Certified) Enables: Yes</div>
<div class="t" style="font:9.1px 'DejaVu Sans',sans-serif;color:#161616;top:371.00px;height:20px;line-height:20px;letter-spacing:-0.050px;left:301.60px;">Profile 2 (Extreme) Enables: No</div>
<div class="t" style="font:9.1px 'DejaVu Sans',sans-serif;color:#161616;top:385.15px;height:20px;line-height:20px;letter-spacing:-0.050px;left:301.60px;">Profile 1 Channel Config: 2 DIMM/channel</div>
<div class="t" style="font:bold condensed 8.39px 'DejaVu Sans Condensed','DejaVu Sans',sans-serif;color:#fff;top:400.20px;height:20px;line-height:20px;letter-spacing:0.168px;left:301.50px;">XMP PARAMETER</div>
<div class="t" style="font:bold condensed 8.39px 'DejaVu Sans Condensed','DejaVu Sans',sans-serif;color:#fff;top:400.20px;height:20px;line-height:20px;letter-spacing:-0.033px;left:556.20px;">PROFILE 1</div>
<div class="t" style="font:bold condensed 8.39px 'DejaVu Sans Condensed','DejaVu Sans',sans-serif;color:#fff;top:400.20px;height:20px;line-height:20px;left:622.80px;">PROFILE 2</div>
<div class="t" style="font:9.1px 'DejaVu Sans',sans-serif;color:#161616;top:414.70px;height:20px;line-height:20px;letter-spacing:-0.050px;left:301.60px;">Speed Grade:</div>
<div class="t" style="font:9.1px 'DejaVu Sans',sans-serif;color:#161616;top:414.70px;height:20px;line-height:20px;letter-spacing:-0.050px;left:560.80px;">DDR4-3200</div>
<div class="t" style="font:9.1px 'DejaVu Sans',sans-serif;color:#161616;top:414.70px;height:20px;line-height:20px;letter-spacing:-0.050px;left:627.70px;">N/A</div>
<div class="t" style="font:9.1px 'DejaVu Sans',sans-serif;color:#161616;top:428.85px;height:20px;line-height:20px;letter-spacing:-0.050px;left:301.60px;">DRAM Clock Frequency:</div>
<div class="t" style="font:9.1px 'DejaVu Sans',sans-serif;color:#161616;top:428.85px;height:20px;line-height:20px;letter-spacing:-0.050px;left:560.80px;">1600 MHz</div>
<div class="t" style="font:9.1px 'DejaVu Sans',sans-serif;color:#161616;top:428.85px;height:20px;line-height:20px;letter-spacing:-0.050px;left:627.70px;">N/A</div>
<div class="t" style="font:9.1px 'DejaVu Sans',sans-serif;color:#161616;top:443.00px;height:20px;line-height:20px;letter-spacing:-0.050px;left:301.60px;">Module VDD Voltage Level:</div>
<div class="t" style="font:9.1px 'DejaVu Sans',sans-serif;color:#161616;top:443.00px;height:20px;line-height:20px;letter-spacing:-0.050px;left:560.80px;">1,35 V</div>
<div class="t" style="font:9.1px 'DejaVu Sans',sans-serif;color:#161616;top:443.00px;height:20px;line-height:20px;letter-spacing:-0.050px;left:627.70px;">N/A</div>
<div class="t" style="font:9.1px 'DejaVu Sans',sans-serif;color:#161616;top:457.15px;height:20px;line-height:20px;letter-spacing:-0.050px;left:301.60px;">Minimum DRAM Cycle Time (tCK):</div>
<div class="t" style="font:9.1px 'DejaVu Sans',sans-serif;color:#161616;top:457.15px;height:20px;line-height:20px;letter-spacing:-0.050px;left:560.80px;">0,625 ns</div>
<div class="t" style="font:9.1px 'DejaVu Sans',sans-serif;color:#161616;top:457.15px;height:20px;line-height:20px;letter-spacing:-0.050px;left:627.70px;">N/A</div>
<div class="t" style="font:9.1px 'DejaVu Sans',sans-serif;color:#161616;top:471.30px;height:20px;line-height:20px;letter-spacing:-0.050px;left:301.60px;">CAS Latencies Supported:</div>
<div class="t" style="font:9.1px 'DejaVu Sans',sans-serif;color:#161616;top:471.30px;height:20px;line-height:20px;letter-spacing:-0.050px;left:560.80px;">14T</div>
<div class="t" style="font:9.1px 'DejaVu Sans',sans-serif;color:#161616;top:471.30px;height:20px;line-height:20px;letter-spacing:-0.050px;left:627.70px;">N/A</div>
<div class="t" style="font:9.1px 'DejaVu Sans',sans-serif;color:#161616;top:485.45px;height:20px;line-height:20px;letter-spacing:-0.050px;left:301.60px;">CAS Latency Time (tAA):</div>
<div class="t" style="font:9.1px 'DejaVu Sans',sans-serif;color:#161616;top:485.45px;height:20px;line-height:20px;letter-spacing:-0.050px;left:560.80px;">8,750 ns</div>
<div class="t" style="font:9.1px 'DejaVu Sans',sans-serif;color:#161616;top:485.45px;height:20px;line-height:20px;letter-spacing:-0.050px;left:627.70px;">N/A</div>
<div class="t" style="font:9.1px 'DejaVu Sans',sans-serif;color:#161616;top:499.60px;height:20px;line-height:20px;letter-spacing:-0.050px;left:301.60px;">RAS# to CAS# Delay Time (tRCD):</div>
<div class="t" style="font:9.1px 'DejaVu Sans',sans-serif;color:#161616;top:499.60px;height:20px;line-height:20px;letter-spacing:-0.050px;left:560.80px;">8,750 ns</div>
<div class="t" style="font:9.1px 'DejaVu Sans',sans-serif;color:#161616;top:499.60px;height:20px;line-height:20px;letter-spacing:-0.050px;left:627.70px;">N/A</div>
<div class="t" style="font:9.1px 'DejaVu Sans',sans-serif;color:#161616;top:513.75px;height:20px;line-height:20px;letter-spacing:-0.050px;left:301.60px;">Row Precharge Delay Time (tRP):</div>
<div class="t" style="font:9.1px 'DejaVu Sans',sans-serif;color:#161616;top:513.75px;height:20px;line-height:20px;letter-spacing:-0.050px;left:560.80px;">8,750 ns</div>
<div class="t" style="font:9.1px 'DejaVu Sans',sans-serif;color:#161616;top:513.75px;height:20px;line-height:20px;letter-spacing:-0.050px;left:627.70px;">N/A</div>
<div class="t" style="font:9.1px 'DejaVu Sans',sans-serif;color:#161616;top:527.90px;height:20px;line-height:20px;letter-spacing:-0.050px;left:301.60px;">Active to Precharge Delay Time (tRAS):</div>
<div class="t" style="font:9.1px 'DejaVu Sans',sans-serif;color:#161616;top:527.90px;height:20px;line-height:20px;letter-spacing:-0.050px;left:560.80px;">21,250 ns</div>
<div class="t" style="font:9.1px 'DejaVu Sans',sans-serif;color:#161616;top:527.90px;height:20px;line-height:20px;letter-spacing:-0.050px;left:627.70px;">N/A</div>
<div class="t" style="font:9.1px 'DejaVu Sans',sans-serif;color:#161616;top:542.05px;height:20px;line-height:20px;letter-spacing:-0.050px;left:301.60px;">Active to Active/Refresh Delay Time (tRC):</div>
<div class="t" style="font:9.1px 'DejaVu Sans',sans-serif;color:#161616;top:542.05px;height:20px;line-height:20px;letter-spacing:-0.050px;left:560.80px;">30,000 ns</div>
<div class="t" style="font:9.1px 'DejaVu Sans',sans-serif;color:#161616;top:542.05px;height:20px;line-height:20px;letter-spacing:-0.050px;left:627.70px;">N/A</div>
<div class="t" style="font:9.1px 'DejaVu Sans',sans-serif;color:#161616;top:556.20px;height:20px;line-height:20px;letter-spacing:-0.050px;left:301.60px;">Four Activate Window Delay Time (tFAW):</div>
<div class="t" style="font:9.1px 'DejaVu Sans',sans-serif;color:#161616;top:556.20px;height:20px;line-height:20px;letter-spacing:-0.050px;left:560.80px;">24,000 ns</div>
<div class="t" style="font:9.1px 'DejaVu Sans',sans-serif;color:#161616;top:556.20px;height:20px;line-height:20px;letter-spacing:-0.050px;left:627.70px;">N/A</div>
<div class="t" style="font:9.1px 'DejaVu Sans',sans-serif;color:#161616;top:570.35px;height:20px;line-height:20px;letter-spacing:-0.050px;left:301.60px;">Short Activate to Activate Delay Time (tRRD_S):</div>
<div class="t" style="font:9.1px 'DejaVu Sans',sans-serif;color:#161616;top:570.35px;height:20px;line-height:20px;letter-spacing:-0.050px;left:560.80px;">3,500 ns</div>
<div class="t" style="font:9.1px 'DejaVu Sans',sans-serif;color:#161616;top:570.35px;height:20px;line-height:20px;letter-spacing:-0.050px;left:627.70px;">N/A</div>
<div class="t" style="font:9.1px 'DejaVu Sans',sans-serif;color:#161616;top:584.50px;height:20px;line-height:20px;letter-spacing:-0.050px;left:301.60px;">Long Activate to Activate Delay Time (tRRD_L):</div>
<div class="t" style="font:9.1px 'DejaVu Sans',sans-serif;color:#161616;top:584.50px;height:20px;line-height:20px;letter-spacing:-0.050px;left:560.80px;">5,000 ns</div>
<div class="t" style="font:9.1px 'DejaVu Sans',sans-serif;color:#161616;top:584.50px;height:20px;line-height:20px;letter-spacing:-0.050px;left:627.70px;">N/A</div>
<div class="t" style="font:9.1px 'DejaVu Sans',sans-serif;color:#161616;top:598.65px;height:20px;line-height:20px;letter-spacing:-0.050px;left:301.60px;">Normal Refresh Recovery Delay Time (tRFC1):</div>
<div class="t" style="font:9.1px 'DejaVu Sans',sans-serif;color:#161616;top:598.65px;height:20px;line-height:20px;letter-spacing:-0.050px;left:560.80px;">350,000 ns</div>
<div class="t" style="font:9.1px 'DejaVu Sans',sans-serif;color:#161616;top:598.65px;height:20px;line-height:20px;letter-spacing:-0.050px;left:627.70px;">N/A</div>
<div class="t" style="font:9.1px 'DejaVu Sans',sans-serif;color:#161616;top:612.80px;height:20px;line-height:20px;letter-spacing:-0.050px;left:301.60px;">2x mode Refresh Recovery Delay Time (tRFC2):</div>
<div class="t" style="font:9.1px 'DejaVu Sans',sans-serif;color:#161616;top:612.80px;height:20px;line-height:20px;letter-spacing:-0.050px;left:560.80px;">260,000 ns</div>
<div class="t" style="font:9.1px 'DejaVu Sans',sans-serif;color:#161616;top:612.80px;height:20px;line-height:20px;letter-spacing:-0.050px;left:627.70px;">N/A</div>
<div class="t" style="font:9.1px 'DejaVu Sans',sans-serif;color:#161616;top:626.95px;height:20px;line-height:20px;letter-spacing:-0.050px;left:301.60px;">4x mode Refresh Recovery Delay Time (tRFC4):</div>
<div class="t" style="font:9.1px 'DejaVu Sans',sans-serif;color:#161616;top:626.95px;height:20px;line-height:20px;letter-spacing:-0.050px;left:560.80px;">160,000 ns</div>
<div class="t" style="font:9.1px 'DejaVu Sans',sans-serif;color:#161616;top:626.95px;height:20px;line-height:20px;letter-spacing:-0.050px;left:627.70px;">N/A</div>
<div class="t" style="font:9.1px 'DejaVu Sans',sans-serif;color:#161616;top:640.20px;height:20px;line-height:20px;letter-spacing:-0.050px;right:311.40px;">Show delays in clock cycles</div>
<svg style="left:984px;top:70px" width="14" height="598" viewBox="0 0 14 598" fill="none" stroke="#5c5c5c" stroke-width="2.100">
<path d="M2.200 18.700l4.100-4.300 4.100 4.300"/>
<path d="M2.200 581.200l4.100 4.300 4.100-4.300"/>
</svg>
<svg style="left:4.200px;top:670px" width="76.600" height="14.200">
<defs><pattern id="chk" width="2" height="2" patternUnits="userSpaceOnUse"><rect width="2" height="2" fill="#ddd5ce"/><rect width="1" height="1" fill="#c4b9b0"/><rect x="1" y="1" width="1" height="1" fill="#c4b9b0"/></pattern></defs>
<rect width="76.600" height="14.200" fill="url(#chk)"/></svg>
<div class="t" style="font:bold condensed 8.5px 'DejaVu Sans Condensed','DejaVu Sans',sans-serif;color:#fff;top:669.00px;height:20px;line-height:20px;letter-spacing:-0.011px;left:21.80px;">000h - 0FFh</div>
<div class="t" style="font:bold condensed 8.5px 'DejaVu Sans Condensed','DejaVu Sans',sans-serif;color:#a8a8a8;top:668.00px;height:20px;line-height:20px;letter-spacing:-0.011px;left:21.00px;">000h - 0FFh</div>
<div class="t" style="font:bold condensed 8.5px 'DejaVu Sans Condensed','DejaVu Sans',sans-serif;color:#a3a3a3;top:668.00px;height:20px;line-height:20px;letter-spacing:-0.084px;left:100.30px;">100h - 1FFh</div>
<div class="t" style="font:bold condensed 8.5px 'DejaVu Sans Condensed','DejaVu Sans',sans-serif;color:#a3a3a3;top:668.00px;height:20px;line-height:20px;letter-spacing:0.105px;left:186.00px;">Screenshot</div>
<div class="t" style="font:bold condensed 8.5px 'DejaVu Sans Condensed','DejaVu Sans',sans-serif;color:#111;top:668.00px;height:20px;line-height:20px;letter-spacing:-0.006px;left:272.40px;">SPD Audit</div>
<svg style="left:5px;top:689px" width="11" height="10" viewBox="0 0 11 10"><path d="M1.800 5.200l2.300 2.400 4.600-5.200" fill="none" stroke="#fff" stroke-width="1.800"/></svg>
<div class="t" style="font:bold condensed 8.05px 'DejaVu Sans Condensed','DejaVu Sans',sans-serif;color:#dcf7b8;top:685.60px;height:20px;line-height:20px;letter-spacing:0.003px;left:19.00px;">CRC OK</div>
<div style="left:61.20px;top:687.30px;width:87.60px;height:13.90px;background:#f0f0f0;box-shadow:inset 1px 0 0 #adadad, inset 0 1.200px 0 #c4c4c4, inset -1px -1px 0 #fff;"></div>
<div style="left:151.00px;top:687.30px;width:70.60px;height:13.90px;background:#f0f0f0;box-shadow:inset 1px 0 0 #adadad, inset 0 1.200px 0 #c4c4c4, inset -1px -1px 0 #fff;"></div>
<div style="left:225.00px;top:687.30px;width:72.00px;height:13.90px;background:#f0f0f0;box-shadow:inset 1px 0 0 #adadad, inset 0 1.200px 0 #c4c4c4, inset -1px -1px 0 #fff;"></div>
<div style="left:300.00px;top:687.30px;width:696.00px;height:13.90px;background:#f0f0f0;box-shadow:inset 1px 0 0 #adadad, inset 0 1.200px 0 #c4c4c4, inset -1px -1px 0 #fff;"></div>
<div class="t" style="font:condensed 8.14px 'DejaVu Sans Condensed','DejaVu Sans',sans-serif;color:#222;top:685.00px;height:20px;line-height:20px;letter-spacing:0.054px;left:62.00px;">SMBus 0 EEPROM 50h</div>
<div class="t" style="font:condensed 8.14px 'DejaVu Sans Condensed','DejaVu Sans',sans-serif;color:#222;top:685.00px;height:20px;line-height:20px;letter-spacing:0.008px;left:153.00px;">SMBC 790B:1002</div>
<div class="t" style="font:condensed 8.14px 'DejaVu Sans Condensed','DejaVu Sans',sans-serif;color:#222;top:685.00px;height:20px;line-height:20px;letter-spacing:-0.054px;left:226.00px;">SMBClock 95 kHz</div>
<svg style="left:986px;top:690px" width="11" height="11" viewBox="0 0 11 11" stroke="#a8a8a8" stroke-width="1"><path d="M10 1L1 10M10 4.500L4.500 10M10 8L8 10"/></svg>
<div style="left:80.40px;top:67.30px;width:186.50px;height:95.80px;background:#f2f2f2;box-sizing:border-box;border-left:1px solid #cdcdcd;border-top:1px solid #d5d5d5;box-shadow:1.300px 1.300px 1.200px .200px rgba(90,90,90,.85);"></div>
<svg style="left:0;top:0" width="1000" height="704" viewBox="0 0 1000 704">
<rect x="82.00" y="121.50" width="182.80" height="17.00" fill="#91c9f7"/>
<rect x="104.00" y="141.10" width="160.80" height="1.00" fill="#d4d4d4"/>
</svg>
<div class="t" style="font:9.24px 'Liberation Sans',sans-serif;color:#000;top:68.00px;height:20px;line-height:20px;letter-spacing:-0.103px;left:107.60px;">Plain Text Report</div>
<div class="t" style="font:9.24px 'Liberation Sans',sans-serif;color:#000;top:85.20px;height:20px;line-height:20px;letter-spacing:-0.004px;left:107.60px;">Microsoft Excel Report</div>
<div class="t" style="font:9.24px 'Liberation Sans',sans-serif;color:#000;top:102.60px;height:20px;line-height:20px;letter-spacing:-0.062px;left:107.60px;">HTML Report</div>
<div class="t" style="font:9.24px 'Liberation Sans',sans-serif;color:#000;top:120.00px;height:20px;line-height:20px;letter-spacing:0.011px;left:107.60px;">Complete HTML Report</div>
<div class="t" style="font:9.24px 'Liberation Sans',sans-serif;color:#000;top:142.80px;height:20px;line-height:20px;letter-spacing:0.091px;left:107.60px;">Copy plain text to Clipboard</div>
<svg style="left:267px;top:120px" width="26" height="23" viewBox="267 120 26 23"><path d="M268.400 131.600L280.700 121.400V126h11.200v10.700H280.700v5.100z" fill="#ec1c24"/></svg>
<svg style="left:78px;top:40px" width="72" height="30" viewBox="78 40 72 30"><rect x="81.150" y="42.650" width="65.750" height="24.300" fill="none" stroke="#e9111f" stroke-width="2.200"/></svg>
</div></body></html>
